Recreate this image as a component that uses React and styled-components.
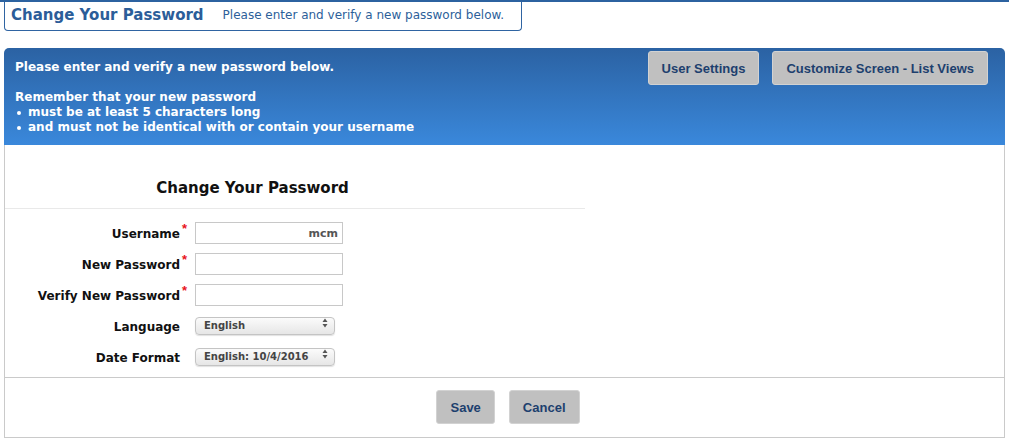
import React from 'react';
import styled, { createGlobalStyle } from 'styled-components';

const GlobalStyle = createGlobalStyle`
	html, body {
		margin: 0;
		padding: 0;
		background: #ffffff;
	}
	body {
		font-family: 'DejaVu Sans', Verdana, sans-serif;
	}
	* {
		box-sizing: border-box;
	}
`;

function Chevrons() {
	return (
		<svg width='6' height='10' viewBox='0 0 6 10'>
			<path d='M3 0.5 L5.5 4 L0.5 4 Z' fill='#555' />
			<path d='M3 9.5 L5.5 6 L0.5 6 Z' fill='#555' />
		</svg>
	);
}

const rows = [
	{ label: 'Username', required: true, value: 'mcm' },
	{ label: 'New Password', required: true, type: 'password' },
	{ label: 'Verify New Password', required: true, type: 'password' },
	{ label: 'Language', options: ['English'] },
	{ label: 'Date Format', options: ['English: 10/4/2016'] },
];

export default function App() {
	return (
		<Page>
			<GlobalStyle />
			<TitleBox>
				<Title>Change Your Password</Title>
				<Subtitle>Please enter and verify a new password below.</Subtitle>
			</TitleBox>
			<Banner>
				<BannerText>
					Please enter and verify a new password below.
					<br />
					<br />
					Remember that your new password
					<Bullets>
						<li>must be at least 5 characters long</li>
						<li>and must not be identical with or contain your username</li>
					</Bullets>
				</BannerText>
				<BannerActions>
					<GrayButton>User Settings</GrayButton>
					<GrayButton>Customize Screen - List Views</GrayButton>
				</BannerActions>
			</Banner>
			<Panel>
				<FormArea>
					<FormHeading>Change Your Password</FormHeading>
					<Fields>
						{rows.map((r) => (
							<Row key={r.label}>
								<Label>
									{r.label}
									<Star $show={r.required}>*</Star>
								</Label>
								{r.options ? (
									<SelectWrap>
										<Select defaultValue={r.options[0]}>
											{r.options.map((o) => (
												<option key={o}>{o}</option>
											))}
										</Select>
										<Arrow>
											<Chevrons />
										</Arrow>
									</SelectWrap>
								) : (
									<TextInput
										type={r.type || 'text'}
										defaultValue={r.value || ''}
									/>
								)}
							</Row>
						))}
					</Fields>
				</FormArea>
				<Footer>
					<GrayButton>Save</GrayButton>
					<GrayButton>Cancel</GrayButton>
				</Footer>
			</Panel>
		</Page>
	);
}

const Page = styled.div`
	width: 1009px;
	height: 444px;
	border-top: 2px solid #2c62a0;
	padding: 0 4px;
	overflow: hidden;
`;
const TitleBox = styled.div`
	width: 518px;
	height: 29px;
	border: 1px solid #2f64a2;
	border-top: none;
	border-radius: 0 0 4px 4px;
	display: flex;
	align-items: center;
	padding: 0 0 2px 6px;
	margin-bottom: 17px;
`;
const Title = styled.div`
	font-size: 15px;
	font-weight: bold;
	color: #2b5d99;
	margin-right: 19px;
`;
const Subtitle = styled.div`
	font-size: 12px;
	color: #2d5f9a;
`;
const Banner = styled.div`
	height: 97px;
	background: linear-gradient(to bottom, #2b62a3, #3a88db);
	border-radius: 5px 5px 0 0;
	display: flex;
	justify-content: space-between;
	align-items: flex-start;
	padding: 3px 17px 0 11px;
`;
const BannerText = styled.div`
	color: #ffffff;
	font-size: 12px;
	font-weight: bold;
	line-height: 15px;
	padding-top: 9px;
`;
const Bullets = styled.ul`
	list-style: none;
	margin: 0;
	padding: 0;
	li {
		position: relative;
		padding-left: 13px;
	}
	li::before {
		content: '';
		position: absolute;
		left: 2px;
		top: 6px;
		width: 4px;
		height: 4px;
		border-radius: 50%;
		background: #ffffff;
	}
`;
const BannerActions = styled.div`
	display: flex;
	gap: 13px;
`;
const GrayButton = styled.button`
	height: 34px;
	padding: 0 13px;
	background: #c0c0c0;
	border: 1px solid #d2d2d2;
	border-radius: 3px;
	color: #1d3f6e;
	font-family: 'Liberation Sans', Arial, sans-serif;
	font-weight: bold;
	font-size: 13px;
	cursor: pointer;
`;
const Panel = styled.div`
	height: 293px;
	border: 1px solid #cacaca;
	border-top: none;
	display: flex;
	flex-direction: column;
`;
const FormArea = styled.div`
	flex: 1;
	width: 580px;
`;
const FormHeading = styled.div`
	width: 100%;
	text-align: center;
	font-size: 15px;
	font-weight: bold;
	color: #111;
	padding: 34px 85px 11px 0;
	border-bottom: 1px solid #e9e9e9;
`;
const Fields = styled.div`
	display: flex;
	flex-direction: column;
	gap: 9px;
	padding-top: 13px;
`;
const Row = styled.div`
	display: grid;
	grid-template-columns: 190px auto;
	align-items: center;
	min-height: 22px;
`;
const Label = styled.div`
	font-size: 12px;
	font-weight: bold;
	color: #111;
	padding: 2px 5px 0 0;
	display: flex;
	justify-content: flex-end;
	align-items: flex-start;
`;
const Star = styled.span`
	color: #e8141b;
	font-size: 13px;
	font-family: 'Liberation Sans', Arial, sans-serif;
	width: 8px;
	margin-left: 2px;
	margin-top: -6px;
	visibility: ${(p) => (p.$show ? 'visible' : 'hidden')};
`;
const TextInput = styled.input`
	width: 148px;
	height: 22px;
	border: 1px solid #c8c8c8;
	padding: 0 4px;
	text-align: right;
	font-family: 'DejaVu Sans', Verdana, sans-serif;
	font-size: 11px;
	font-weight: bold;
	color: #555;
	outline: none;
`;
const SelectWrap = styled.div`
	position: relative;
	width: 140px;
	height: 18px;
	margin-top: -6px;
`;
const Select = styled.select`
	appearance: none;
	width: 100%;
	height: 100%;
	border: 1px solid #c4c4c4;
	border-radius: 4px;
	background: linear-gradient(to bottom, #fbfbfb, #e6e6e6);
	box-shadow: 0 1px 1px rgba(0, 0, 0, 0.12);
	padding: 0 16px 0 8px;
	font-family: 'DejaVu Sans', Verdana, sans-serif;
	font-size: 10px;
	font-weight: bold;
	color: #444;
	outline: none;
`;
const Arrow = styled.span`
	position: absolute;
	right: 7px;
	top: 4px;
	display: flex;
	pointer-events: none;
`;
const Footer = styled.div`
	height: 60px;
	border-top: 1px solid #cacaca;
	display: flex;
	justify-content: center;
	gap: 14px;
	padding: 12px 0 0 7px;
	align-items: flex-start;
`;
